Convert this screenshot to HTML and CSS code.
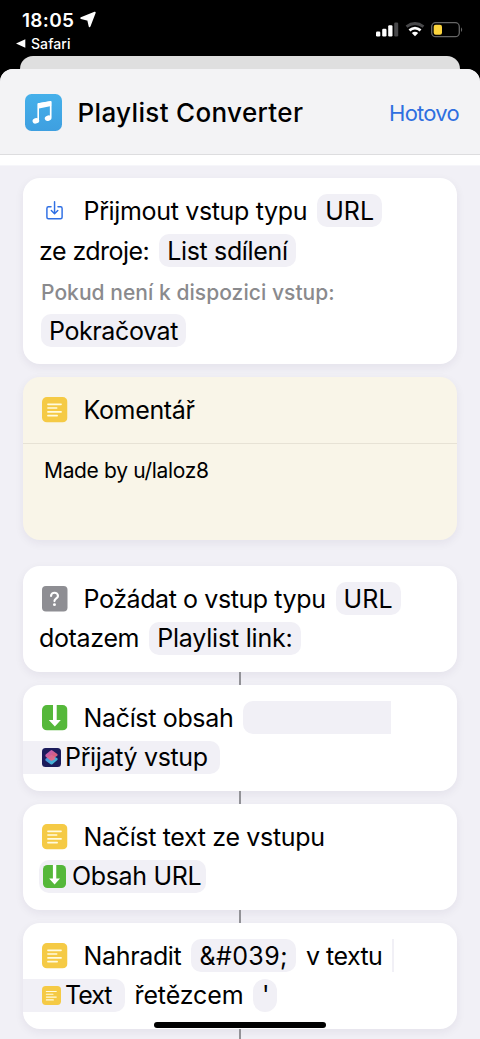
FILE: index.html
```html
<!DOCTYPE html>
<html lang="cs">
<head>
<meta charset="utf-8">
<title>Playlist Converter</title>
<link rel="stylesheet" href="styles.css">
</head>
<body>
<svg class="defs" width="0" height="0" aria-hidden="true">
  <defs>
    <linearGradient id="music" x1="0" y1="0" x2="0" y2="1"><stop offset="0" stop-color="#45b0ea"/><stop offset="1" stop-color="#3e9fe0"/></linearGradient>
    <linearGradient id="pink" x1="0" y1="0" x2="1" y2="1"><stop offset="0" stop-color="#c46ae0"/><stop offset=".6" stop-color="#ee6480"/><stop offset="1" stop-color="#e87890"/></linearGradient>
    <linearGradient id="teal" x1="0" y1="0" x2="1" y2="1"><stop offset="0" stop-color="#4a7fe0"/><stop offset="1" stop-color="#42c8d0"/></linearGradient>
    <symbol id="note" viewBox="0 0 26 26"><rect width="26" height="26" rx="5" fill="#f5ca45"/><path d="M6 7.5h13.500M6 11.3h9M6 15.2h13.500M6 19h9.500" stroke="#fffbe0" stroke-width="1.6" stroke-linecap="round"/></symbol>
    <symbol id="download" viewBox="0 0 26 26"><rect width="26" height="26" rx="5" fill="#55b83a"/><path d="M11.2 0h3.8v15.200h4.200L13.100 22 6.900 15.200h4.300z" fill="#fff"/></symbol>
  </defs>
</svg>
<header class="status">
  <div class="clock">
    <div class="time">18:05
      <svg width="17" height="17" viewBox="0 0 17 17"><path d="M14.800 1.600 1.200 7.200 8.100 8.800 9.600 15.300z" fill="#fff" stroke="#fff" stroke-width="1.800" stroke-linejoin="round"/></svg>
    </div>
    <div class="back"><svg width="10" height="9" viewBox="0 0 10 9"><path d="M0 4.500 9.300.200v8.600z" fill="#fff"/></svg>Safari</div>
  </div>
  <div class="signals">
    <svg width="23" height="16" viewBox="0 0 23 16"><rect x="0" y="9.500" width="4.300" height="5" rx="1.200" fill="#fff"/><rect x="6.200" y="6.800" width="4.300" height="7.700" rx="1.200" fill="#fff"/><rect x="12.200" y="3.300" width="4.300" height="11.200" rx="1.200" fill="#fff"/><rect x="18.200" y=".500" width="4" height="14" rx="1.200" fill="#48484a"/></svg>
    <svg width="20" height="16" viewBox="0 0 20 16"><path d="M1.500 4.700Q10-1.600 18.500 4.700" fill="none" stroke="#48484a" stroke-width="2.800"/><path d="M4.400 8.400Q10 3.900 15.600 8.400" fill="none" stroke="#fff" stroke-width="2.700"/><path d="M6.800 11Q10 8.500 13.200 11L10 14.200z" fill="#fff"/></svg>
    <svg width="32" height="16" viewBox="0 0 32 16"><rect x=".700" y=".700" width="27.600" height="14" rx="4" fill="none" stroke="#666" stroke-width="1.300"/><rect x="2.700" y="2.800" width="8.300" height="9.900" rx="2" fill="#fbd43c"/><path d="M30 5.300q2.300 2.400 0 4.800z" fill="#666"/></svg>
  </div>
</header>
<div class="behind"></div>
<main class="sheet">
  <div class="titlebar">
    <svg width="37" height="37" viewBox="0 0 37 37"><rect width="37" height="37" rx="6.500" fill="url(#music)"/><path d="M13 10.200 25.700 7.800V23.500" fill="none" stroke="#fff" stroke-width="1.700" stroke-linejoin="round"/><path d="M12.400 10.100Q12.400 9.400 13.200 9.200L25.600 7.300Q26.200 7.200 26.200 7.900V12L14 14.500V26.500H12.400z" fill="#fff"/><ellipse cx="10.900" cy="26.800" rx="3.400" ry="2.700" transform="rotate(-20 10.900 26.800)" fill="#fff"/><ellipse cx="23.100" cy="24.200" rx="3.400" ry="2.700" transform="rotate(-20 23.100 24.200)" fill="#fff"/></svg>
    <h1>Playlist Converter</h1>
    <span class="done">Hotovo</span>
  </div>
  <div class="spacer"></div>
  <div class="actions">
    <section class="card intake">
      <div class="row first"><svg class="icon" viewBox="0 0 26 26"><path d="M9.200 9H6.600Q5 9 5 10.600V19.500Q5 21.100 6.600 21.100H18.900Q20.500 21.100 20.500 19.500V10.600Q20.500 9 18.900 9H16.300M12.800 3.800V15.800M9.500 12.800 12.800 16 16.100 12.800" fill="none" stroke="#2f6fe4" stroke-width="1.500" stroke-linecap="round" stroke-linejoin="round"/></svg><span>Přijmout vstup typu</span><span class="pill loose">URL</span></div>
      <div class="row second"><span class="tight">ze zdroje:</span><span class="pill">List sdílení</span></div>
      <p class="hint">Pokud není k dispozici vstup:</p>
      <div class="fallback"><span class="pill">Pokračovat</span></div>
    </section>
    <section class="card comment">
      <div class="row first"><svg class="icon"><use href="#note"/></svg><span>Komentář</span></div>
      <p class="body">Made by u/laloz8</p>
    </section>
    <section class="card">
      <div class="row first"><svg class="icon" viewBox="0 0 26 26"><rect width="26" height="26" rx="4" fill="#8e8e93"/><path d="M9.200 10.200C9.200 5.700 16.300 5.800 16.300 10.100C16.300 12.700 12.700 12.600 12.700 15.400" fill="none" stroke="#fff" stroke-width="2.200" stroke-linecap="round"/><circle cx="12.700" cy="19" r="1.500" fill="#fff"/></svg><span class="ask">Požádat o vstup typu</span><span class="pill loose">URL</span></div>
      <div class="row"><span>dotazem</span><span class="pill link-name">Playlist link:</span></div>
    </section>
    <div class="link"></div>
    <section class="card">
      <div class="row first"><svg class="icon"><use href="#download"/></svg><span>Načíst obsah</span><span class="pill cut"></span></div>
      <div class="row"><span class="pill bleed"><svg class="app" viewBox="0 0 19 19"><rect width="19" height="19" rx="3.500" fill="#1c1c5c"/><path d="M9.500 6.700 15.300 10.300Q16.100 11.100 15.300 11.900L10.400 16.200Q9.500 16.900 8.600 16.200L3.700 12.700Q2.900 11.700 3.700 10.800z" fill="url(#teal)"/><path d="M8.600 2.400Q9.500 1.700 10.400 2.400L15.300 6.100Q16 6.900 15.300 7.700L12.500 9.500 13.300 10.900 10.400 12.600Q9.500 13.100 8.600 12.500L3.700 8.700Q2.900 7.700 3.700 6.600z" fill="url(#pink)" opacity=".9"/></svg>Přijatý vstup</span></div>
    </section>
    <div class="link"></div>
    <section class="card">
      <div class="row first"><svg class="icon"><use href="#note"/></svg><span>Načíst text ze vstupu</span></div>
      <div class="row"><span class="pill result"><svg class="source"><use href="#download"/></svg>Obsah URL</span></div>
    </section>
    <div class="link"></div>
    <section class="card">
      <div class="row first"><svg class="icon"><use href="#note"/></svg><span>Nahradit</span><span class="pill code">&amp;#039;</span><span class="tight">v textu</span><span class="sliver"></span></div>
      <div class="row"><span class="pill bleed text"><svg class="app"><use href="#note"/></svg>Text</span><span class="even">řetězcem</span><span class="pill quote">'</span></div>
    </section>
    <div class="link"></div>
  </div>
</main>
<div class="home"></div>
</body>
</html>
```
FILE: styles.css
```css
*{box-sizing:border-box}
body{margin:0;height:1039px;overflow:hidden;background:#000;color:#000;font-family:Inter,"Noto Sans",sans-serif}
svg{display:block;flex:none}
.defs{position:absolute}
.status{height:56px;display:flex;justify-content:space-between;color:#fff;padding:9px 17px 0 16px}
.time{display:flex;align-items:center;gap:6px;height:22px;padding-left:6px;font-size:19px;font-weight:600;letter-spacing:.3px}
.time svg{margin-top:-1px}
.back{display:flex;align-items:center;gap:5px;height:25px;font-size:14px;font-weight:500;letter-spacing:.08px}
.signals{display:flex;gap:6px;padding-top:13px}
.behind{height:13px;margin:0 20px;border-radius:13px 13px 0 0;background:#dfdfdf}
.sheet{position:relative;height:970px;border-radius:13px 13px 0 0;background:#f1f0f6;overflow:hidden}
.titlebar{height:86px;display:flex;align-items:center;padding:2px 21px 0 25px;background:#f3f3f5;border-bottom:1px solid #dddddf}
h1{margin:0 0 0 15.500px;flex:1;font-size:26px;font-weight:500;letter-spacing:.34px;white-space:nowrap}
.done{font-size:22px;letter-spacing:-.75px;color:#2f6fe0}
.spacer{height:11px;background:#fff;border-bottom:1px solid #f6f6fa}
.actions{padding:12px 23px 0}
.card{height:106px;padding:13px 16px 0;border-radius:17px;background:#fff;box-shadow:0 3px 10px rgba(40,30,80,.065)}
.intake{height:186px;margin-bottom:13px}
.row{display:flex;align-items:center;gap:10px;height:39.5px;font-size:25px;letter-spacing:-.34px;white-space:nowrap}
.first{padding-left:3px}
.second{height:40.500px}
.icon{width:25.500px;height:25.500px;margin-right:6px}
.pill{display:flex;align-items:center;height:33px;padding:0 8px;border-radius:10px;background:#f1f0f6}
.tight{letter-spacing:-.55px}
.even{letter-spacing:-.12px}
.loose{letter-spacing:.1px}
.ask{letter-spacing:-.41px}
.link-name{letter-spacing:-.2px}
.hint{margin:8px 0 0 2px;line-height:28px;font-size:21px;font-weight:500;letter-spacing:.05px;color:#8a8a8d}
.fallback{display:flex;margin:7px 0 0 2px;font-size:25px;letter-spacing:-.4px}
.comment{height:163px;margin-bottom:26px;background:#f9f5e8}
.body{margin:13px -16px 0;padding:14px 21px;border-top:1.500px solid #e7e2d5;font-size:21px;line-height:26px;letter-spacing:-.34px}
.link{width:2px;height:13px;margin:0 auto;background:#929297}
.cut{width:148px;border-radius:10px 0 0 10px}
.bleed{margin-left:-16px;padding:0 12px 0 19px;border-radius:0 10px 10px 0}
.app{width:19px;height:19px;margin-right:4px}
.result{padding:0 5px 0 4px}
.source{width:23px;height:23px;margin-right:6px}
.code{letter-spacing:.4px}
.text{letter-spacing:-1px;padding-right:13px}
.quote{width:24px;padding:0;justify-content:center;border-radius:12px}
.sliver{width:2px;height:33px;background:#f1f0f6}
.home{position:absolute;left:154px;top:1022px;width:172px;height:6px;border-radius:3px;background:#000}
```
